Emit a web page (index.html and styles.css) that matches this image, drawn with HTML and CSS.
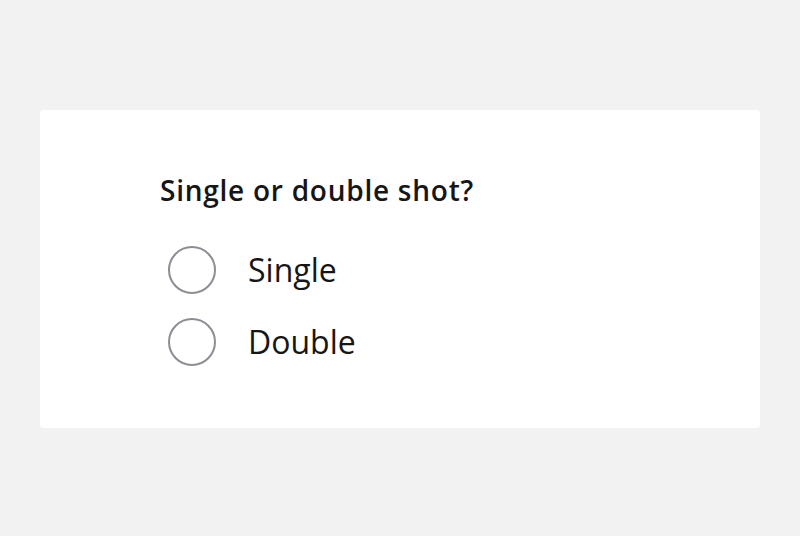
FILE: index.html
```html
<!DOCTYPE html>
<html>
<head>
<meta charset="utf-8">
<link rel="stylesheet" href="styles.css">
</head>
<body>
<div class="page">
  <form class="card">
    <fieldset class="group">
      <legend class="title">Single or double shot?</legend>
      <label class="option">
        <span class="radio"></span>
        <span class="label">Single</span>
      </label>
      <label class="option">
        <span class="radio"></span>
        <span class="label">Double</span>
      </label>
    </fieldset>
  </form>
</div>
</body>
</html>
```

FILE: styles.css
```css
* { box-sizing: border-box; }
html, body { margin: 0; padding: 0; }
body {
  background: #f2f2f2;
  font-family: "Open Sans", "Noto Sans", sans-serif;
  color: #161616;
}
.page {
  width: 800px;
  height: 536px;
  padding: 110px 40px 0;
}
.card {
  background: #ffffff;
  border-radius: 4px;
  height: 318px;
  padding: 62px 120px 0;
}
.group {
  border: 0;
  margin: 0;
  padding: 0;
  display: flex;
  flex-direction: column;
}
.title {
  padding: 0;
  font-size: 28px;
  font-weight: 600;
  line-height: 36px;
  margin-bottom: 26px;
  letter-spacing: 0.75px;
}
.option {
  display: flex;
  align-items: center;
  height: 72px;
}
.radio {
  width: 48px;
  height: 48px;
  border: 2px solid #8d8d96;
  border-radius: 50%;
  margin-left: 8px;
  margin-right: 32px;
  flex: none;
}
.label {
  font-size: 32px;
  line-height: 40px;
}
```
